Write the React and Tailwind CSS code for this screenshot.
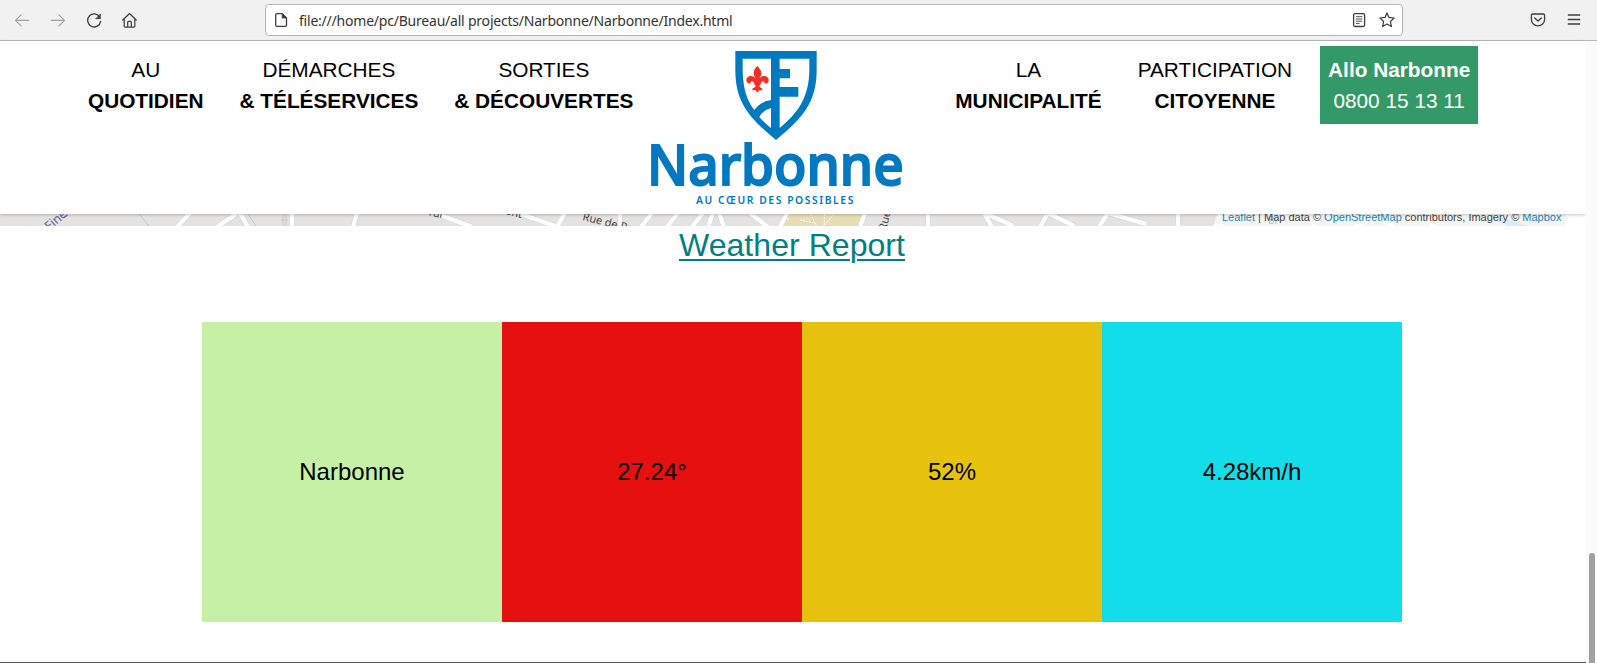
import React from "react";

function Icon({ className = "", children }) {
  return (
    <svg
      className={`h-4 w-4 shrink-0 ${className}`}
      viewBox="0 0 16 16"
      fill="none"
      stroke="currentColor"
      strokeWidth="1.2"
      strokeLinecap="round"
      strokeLinejoin="round"
    >
      {children}
    </svg>
  );
}

function Toolbar() {
  return (
    <div className="flex h-[41px] items-center border-b border-[#b8b8b8] bg-[#f1f1f1] text-[#3d3d3d]">
      <div className="flex w-[265px] items-center gap-5 pl-3.5">
        <Icon className="text-[#a3a3a3]"><path d="M1.5 8.4h13.2M7 2.9 1.5 8.4 7 13.9" /></Icon>
        <Icon className="text-[#a3a3a3]"><path d="M1.3 8.4h13.2M9 2.9l5.500 5.500L9 13.900" /></Icon>
        <Icon>
          <path strokeWidth="1.3" d="M13.800 5.200A6.500 6.500 0 1 0 14.600 9.300" />
          <path d="M14.300 2.500v4.200h-4.200z" fill="currentColor" strokeWidth="0.800" />
        </Icon>
        <Icon>
          <path strokeWidth="1.200" d="M.8 8 7.500 1.500 14.200 8M2.200 6.900V14.300q0 .8.800.8H12q.8 0 .8-.8V6.900M5.700 15V10.200q0-.8.800-.8h2q.8 0 .8.800V15" />
        </Icon>
      </div>
      <div className="flex h-8 w-[1138px] items-center rounded-[4px] border border-[#b5b5b5] bg-white pl-[7px] pr-[7px]">
        <Icon>
          <path strokeWidth="1.3" d="M4 1.700h5.200L13.500 6v7q0 1.300-1.300 1.300H4q-1.300 0-1.300-1.300V3Q2.700 1.700 4 1.700z" />
          <path d="M9.200 1.700V6h4.300z" fill="currentColor" strokeWidth="0.800" />
        </Icon>
        <span className="ml-[10px] flex-1 whitespace-nowrap font-['Noto_Sans',sans-serif] text-[14px] tracking-[-0.215px] text-[#333333]">
          file:///home/pc/Bureau/all projects/Narbonne/Narbonne/Index.html
        </span>
        <Icon className="mr-3">
          <rect x="2.600" y="1.700" width="11" height="12.800" rx="1.500" strokeWidth="1.300" />
          <path d="M5.300 4.700h5.600M5.300 7h5.600M5.300 9.200h5.600M5.300 11.400h3" strokeWidth="0.900" />
        </Icon>
        <Icon>
          <path strokeWidth="1.200" d="m8 .9 2 4.500 5.100.6-3.700 3.500 1 5.100L8 12.100l-4.400 2.500 1-5.100L.9 6 6 5.400z" />
        </Icon>
      </div>
      <div className="flex flex-1 items-center justify-end gap-5 pr-[15px]">
        <Icon>
          <path strokeWidth="1.300" d="M2.700 2h10.600q1.300 0 1.300 1.300V7.500a6.600 6.300 0 0 1-13.200 0V3.300Q1.400 2 2.700 2zM4.700 6 8 9l3.300-3" />
        </Icon>
        <Icon><path strokeWidth="1.300" d="M2.300 3h11.400M2.300 7.500h11.400M2.300 12h11.400" /></Icon>
      </div>
    </div>
  );
}

function NavItem({ top, bottom }) {
  return (
    <a className="block px-2 py-2 text-center text-[20.8px] leading-[31.2px] whitespace-nowrap">
      {top}
      <br />
      <b>{bottom}</b>
    </a>
  );
}

function Logo() {
  return (
    <svg className="mt-[5px] block h-[155px] w-[250px] overflow-visible" viewBox="33 33 750 465" fill="#0079c1">
      <path
        fillRule="evenodd"
        d="M286 33H530V90C530 190 485 236 408 300C331 236 286 190 286 90ZM308 56V92C309 145 321 182 343 210Q362 184 393 180V56ZM419 56V87H450V115H419V141H475V170H419V264C477 216 507 170 508 90V56ZM393 204Q367 211 358 231Q373 249 393 264Z"
      />
      <path
        fill="#ee3124"
        d="M352 77Q339 91 341 102Q342 109 347 115Q340 106 329 108Q318 112 319 122Q322 133 332 130Q331 124 337 124Q342 126 343 133L347 138Q347 142 337 146V151H347L352 158L357 151H367V146Q358 142 358 138L362 133Q363 126 368 124Q374 124 373 130Q384 133 386 122Q387 112 376 108Q365 106 358 115Q363 109 364 102Q365 91 352 77Z"
      />
      <text x="21" y="435" textLength="770" lengthAdjust="spacingAndGlyphs" fontFamily="'Noto Sans', sans-serif" fontWeight="500" fontSize="169" stroke="#0079c1" strokeWidth="6">
        Narbonne
      </text>
      <text x="168" y="492" textLength="472" fontFamily="'Noto Sans', sans-serif" fontWeight="600" fontSize="31">
        AU CŒUR DES POSSIBLES
      </text>
    </svg>
  );
}

function Header() {
  return (
    <header className="relative z-10 flex h-[173px] items-start bg-white pt-[5px] shadow-[0_1px_3px_rgba(0,0,0,0.22)]">
      <nav className="flex w-[651px] gap-5 pl-20">
        <NavItem top="AU" bottom="QUOTIDIEN" />
        <NavItem top="DÉMARCHES" bottom="& TÉLÉSERVICES" />
        <NavItem top="SORTIES" bottom="& DÉCOUVERTES" />
      </nav>
      <Logo />
      <nav className="ml-[46.300px] flex gap-5">
        <NavItem top="LA" bottom="MUNICIPALITÉ" />
        <NavItem top="PARTICIPATION" bottom="CITOYENNE" />
        <a className="block bg-[#339966] p-2 text-center text-[20.8px] leading-[31.2px] whitespace-nowrap text-white">
          <b>Allo Narbonne</b>
          <br />
          0800 15 13 11
        </a>
      </nav>
    </header>
  );
}

const ROADS =
  "M190-1 177 13M239-2 217 13M240-1 248 13M292-1V13M357-1 353 13M437 0 472 13M518-1 555 12M565-1 557 13M620-1V13M652-1 641 13M678-1 667 13M703-1 692 13M713-1 708 13M719-1 724 13M750-1 768 13M787-1 780 13M865-1 860 13M928-1V13M984-1 992 13M985-1 1013 12M1048-1 1040 13M1046-2 1074 12M1108-1 1099 13M1108-1 1146 10M1178-1V13M1220-1 1215 13";

function MapStrip() {
  return (
    <div className="relative h-3 overflow-hidden bg-[#e4e3df]">
      <svg className="block h-3 w-[1586px]" viewBox="0 0 1586 12" fontFamily="'Noto Sans', sans-serif">
        <path d="M779 12 783 0H866L860 12Z" fill="#e6ddb5" />
        <path d="M139 0 149 12" stroke="#9bd0f0" fill="none" />
        <path d="M248 0 256 12M283 0V12M286 0V12M281 6h7" stroke="#c6c5c2" fill="none" />
        <path d={ROADS} stroke="#d5d7e7" strokeWidth="5.500" fill="none" />
        <path d={ROADS} stroke="#fff" strokeWidth="4.200" fill="none" />
        <path d="M784 5h6M800 6l15 3M811 0l5 12M825 0l-1 12M834 0 824 12" stroke="#fff" strokeDasharray="2 1" fill="none" />
        <text x="49" y="17" transform="rotate(-40 49 17)" fontSize="12.500" fill="#5366b5">Fine</text>
        <path d="M64 3l4-2" stroke="#5366b5" />
        <g fontSize="11" fill="#444">
          <text x="427" y="1" transform="rotate(12 427 1)">Tur</text>
          <text x="505" y="0" transform="rotate(14 505 0)">ent</text>
          <text x="582" y="6" transform="rotate(14 582 6)" fontSize="11">Rue de Pa</text>
          <text x="886" y="17" transform="rotate(-76 886 17)">Rue</text>
        </g>
        <path d="M1217 0H1586V12H1213Z" fill="#f5f5f3" />
        <path d="M1229 0h-9l-4 12h7M1355 12l20-7 18 7M1415 0l20 12M1318 0l-5 12" stroke="#fff" strokeWidth="3" fill="none" />
        <path d="M1490 4h14l24 8h-19z" fill="#d6edf9" />
        <path d="M1566 0h20v12h-20z" fill="#fff" />
        <text x="1268" y="10" fontSize="10" fill="#bbb">Bi</text>
      </svg>
      <p className="absolute top-[-5px] left-[1222px] text-[11px] leading-[16.500px] whitespace-nowrap text-[#444444]">
        <a className="text-[#1b86b5]">Leaflet</a> | Map data © <a className="text-[#1b86b5]">OpenStreetMap</a> contributors, Imagery © <a className="text-[#1b86b5]">Mapbox</a>
      </p>
    </div>
  );
}

function Card({ color, children }) {
  return <div className={`flex h-[300px] items-center justify-center text-2xl ${color}`}>{children}</div>;
}

export default function App() {
  return (
    <div className="flex h-[663px] w-[1597px] flex-col overflow-hidden bg-white font-['Liberation_Sans',Arial,sans-serif] text-black">
      <Toolbar />
      <div className="flex flex-1">
        <main className="flex w-[1586px] flex-col border-b border-[#555555]">
          <Header />
          <MapStrip />
          <h1 className="h-24 pt-px pl-[679px] text-[32px] leading-[37px] tracking-[0.050px] text-[#008080] underline decoration-2 underline-offset-[3px]">Weather Report</h1>
          <section className="ml-[202px] grid w-[1200px] grid-cols-4">
            <Card color="bg-[#c5f0a5]">Narbonne</Card>
            <Card color="bg-[#e61010]">27.24°</Card>
            <Card color="bg-[#e7c310]">52%</Card>
            <Card color="bg-[#12dde9]">4.28km/h</Card>
          </section>
        </main>
        <aside className="relative z-20 flex w-[11px] items-end justify-center bg-[#fbfbfb] pl-px">
          <div className="h-[110px] w-1.5 rounded-t-full bg-[#a1a1a1]" />
        </aside>
      </div>
    </div>
  );
}
